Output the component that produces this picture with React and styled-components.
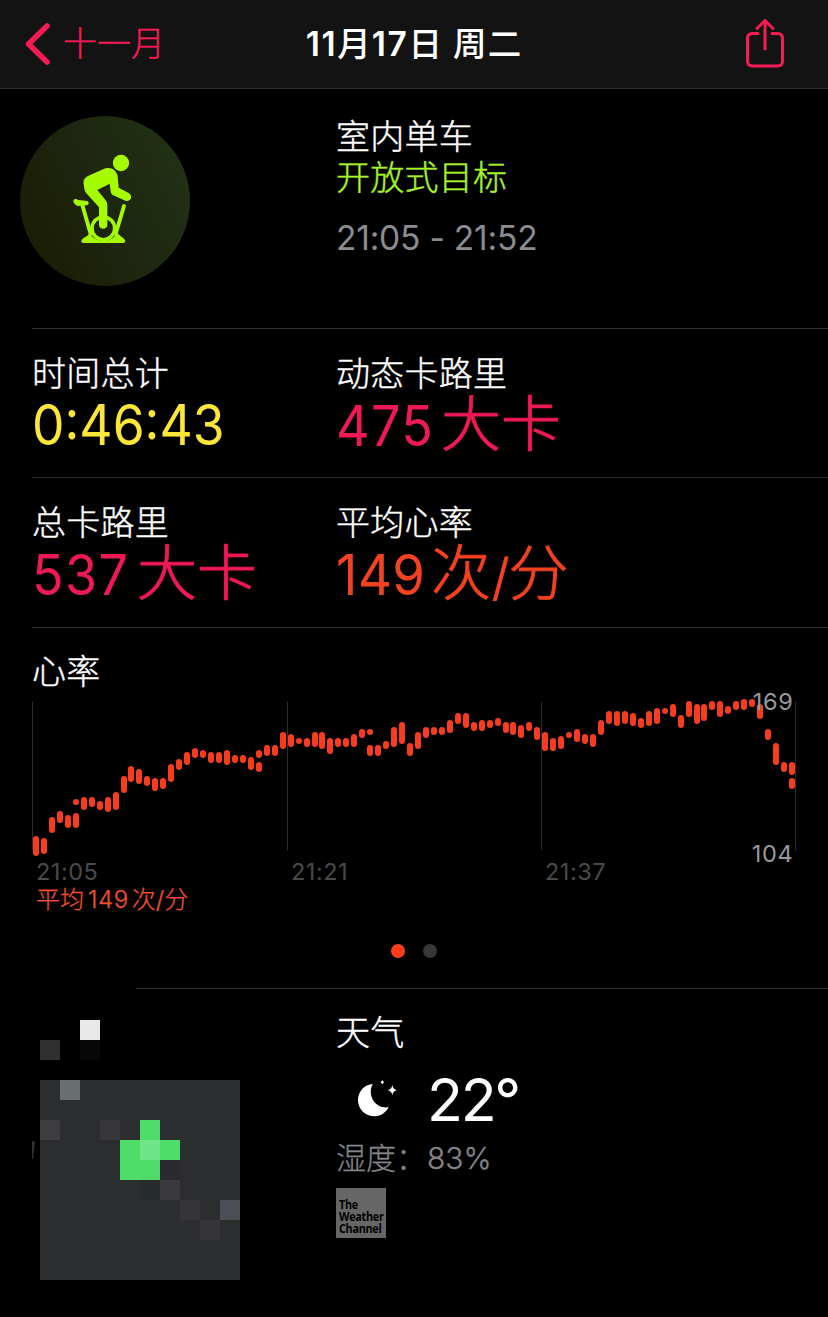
import React from 'react';
import styled, { createGlobalStyle } from 'styled-components';

const GlobalStyle = createGlobalStyle`
  * { box-sizing: border-box; }
  body {
    margin: 0;
    background: #000;
    color: #fff;
    font-family: Inter, "Noto Sans CJK SC", sans-serif;
  }
`;

const Screen = styled.main`
  width: 828px;
  height: 1317px;
  overflow: hidden;
  background: #000;
`;

const NavBar = styled.header`
  display: grid;
  grid-template-columns: 1fr auto 1fr;
  align-items: center;
  height: 89px;
  padding: 0 25px;
  background: #131313;
  border-bottom: 1px solid #2b2b2b;
`;

const BackButton = styled.a`
  display: flex;
  align-items: center;
  gap: 12px;
  color: #f61a55;
  font-size: 34px;
  font-weight: 300;
  line-height: 48px;
  -webkit-text-stroke: 0.35px currentColor;
`;

const NavTitle = styled.h1`
  margin: 0;
  font-size: 33.5px;
  font-weight: 500;
  line-height: 48px;
  letter-spacing: 1.1px;
  white-space: pre;
`;

const TitleNumber = styled.span`
  font-weight: 600;
  letter-spacing: 1.6px;
`;

const ShareButton = styled.a`
  display: flex;
  justify-self: end;
  margin-right: 18px;
`;

const Row = styled.section`
  display: grid;
  grid-template-columns: 304px 1fr;
  height: ${(p) => p.$height}px;
  margin-left: 32px;
  padding-top: ${(p) => p.$top}px;
  border-bottom: ${(p) => (p.$last ? 'none' : '1px solid #2f2f2f')};
`;

const Badge = styled.div`
  width: 170px;
  height: 170px;
  margin-left: -12px;
  border-radius: 50%;
  background: linear-gradient(65deg, #1b1c04 8%, #1e260f 50%, #223216 95%);
`;

const Label = styled.div`
  font-size: 34px;
  font-weight: 300;
  line-height: 41px;
  letter-spacing: 0.25px;
  color: ${(p) => p.$color || '#fff'};
  white-space: nowrap;
  -webkit-text-stroke: 0.4px currentColor;
`;

const TimeRange = styled.div`
  margin-top: 20px;
  font-size: 33.5px;
  line-height: 40px;
  color: #8b8b90;
  letter-spacing: -0.2px;
`;

const Value = styled.div`
  display: flex;
  align-items: baseline;
  height: 64px;
  margin-top: ${(p) => (p.$withUnit ? -2 : -1)}px;
  line-height: 64px;
  font-size: 56px;
  color: ${(p) => p.$color};
  white-space: nowrap;
`;

const Digits = styled.span`
  width: ${(p) => p.$width}px;
  letter-spacing: ${(p) => p.$spacing || 0}px;
  transform: scaleX(${(p) => p.$stretch});
  transform-origin: left;
`;

const Unit = styled.span`
  font-size: 60px;
  font-weight: 300;
  -webkit-text-stroke: 0.9px currentColor;
`;

const Slash = styled.span`
  margin: 0 -1px 0 1px;
  font-size: 50px;
`;

const HeartSection = styled.section`
  height: 360px;
  padding: 23px 0 0 32px;
`;

const Chart = styled.svg`
  display: block;
  margin-top: -2px;
`;

const AxisTimes = styled.div`
  display: grid;
  grid-template-columns: 255px 254px 1fr;
  margin: -7px 0 0 4px;
  color: #4a4a4a;
  font-size: 23.5px;
  line-height: 28px;
  letter-spacing: 0.5px;
`;

const Average = styled.div`
  padding-left: 4px;
  color: #f4502d;
  font-size: 24px;
  font-weight: 300;
  line-height: 28px;
  -webkit-text-stroke: 0.25px currentColor;
`;

const AverageNumber = styled.span`
  margin: 0 3px 0 4px;
  letter-spacing: 0.6px;
`;

const Pager = styled.div`
  display: flex;
  justify-content: center;
  gap: 18px;
  margin: 30px 32px 0 0;
`;

const PageDot = styled.i`
  width: 14px;
  height: 14px;
  border-radius: 50%;
  background: ${(p) => (p.$active ? '#ff3b1d' : '#383838')};
`;

const Divider = styled.div`
  height: 1px;
  margin-left: 136px;
  background: #2f2f2f;
`;

const Weather = styled.div`
  margin-top: -8px;
`;

const WeatherLine = styled.div`
  display: flex;
  align-items: center;
  gap: 29px;
  height: 70px;
  margin-top: 12px;
  padding-left: 21px;
`;

const Temperature = styled.span`
  font-size: 59px;
  line-height: 70px;
  letter-spacing: -2.3px;
`;

const Humidity = styled.div`
  display: flex;
  margin-top: 1px;
  color: #85858a;
  font-size: 30px;
  font-weight: 300;
  line-height: 44px;
  -webkit-text-stroke: 0.3px currentColor;
`;

const HumidityName = styled.span`
  width: 91px;
`;

const ChannelLogo = styled.div`
  width: 50px;
  height: 50px;
  margin-top: 8px;
  padding: 11px 0 0 3px;
  background: #666;
  color: #000;
`;

const LogoText = styled.div`
  width: 50px;
  font: 700 12px/12px "Open Sans", sans-serif;
  letter-spacing: -0.3px;
  white-space: nowrap;
  transform: scaleX(0.9);
  transform-origin: left;
`;

const bars = [
  [0, 836, 856], [1, 838, 854], [2, 817, 833], [3, 811, 823], [4, 815, 828], [5, 813, 828], [5, 799, 805],
  [6, 797, 810], [7, 797, 807], [8, 801, 810], [9, 797, 812], [10, 792, 810], [11, 776, 793], [12, 766, 782],
  [13, 769, 784], [14, 776, 786], [15, 778, 791], [16, 778, 789], [17, 764, 782], [18, 759, 770], [19, 752, 765],
  [20, 748, 758], [21, 750, 758], [22, 752, 763], [23, 752, 763], [24, 750, 765], [25, 755, 763], [26, 755, 763],
  [27, 757, 770], [28, 750, 758], [28, 762, 772], [29, 745, 756], [30, 745, 756], [31, 732, 749], [32, 734, 747],
  [33, 738, 744], [34, 738, 747], [35, 732, 747], [36, 732, 749], [37, 738, 754], [38, 738, 747], [39, 738, 747],
  [40, 734, 747], [41, 729, 738], [42, 729, 735], [42, 745, 756], [43, 745, 756], [44, 741, 749], [45, 727, 747],
  [46, 722, 744], [47, 743, 756], [48, 732, 749], [49, 727, 738], [50, 727, 735], [51, 727, 735], [52, 720, 733],
  [53, 713, 724], [54, 713, 728], [55, 722, 731], [56, 720, 731], [57, 720, 728], [58, 718, 726], [59, 722, 733],
  [60, 722, 735], [61, 725, 738], [62, 722, 731], [63, 727, 740], [64, 732, 751], [65, 738, 751], [66, 736, 749],
  [67, 732, 738], [68, 729, 742], [69, 734, 744], [70, 734, 747], [71, 720, 735], [72, 711, 724], [73, 711, 726],
  [74, 711, 724], [75, 713, 726], [76, 718, 728], [77, 711, 726], [78, 708, 724], [79, 708, 714], [80, 704, 717],
  [81, 715, 728], [82, 701, 717], [83, 704, 724], [84, 704, 721], [85, 701, 710], [86, 701, 717], [87, 706, 714],
  [88, 701, 710], [89, 699, 710], [90, 699, 707], [91, 704, 719], [92, 729, 740], [93, 743, 765], [94, 762, 772],
  [95, 762, 775], [95, 778, 789],
];

function HeartChart() {
  return (
    <Chart width="796" height="175" viewBox="32 690 796 175" overflow="visible">
      {[32, 287, 541, 795].map((x) => (
        <rect key={x} x={x} y="702" width="1" height="148" fill="#2c2c2c" />
      ))}
      {bars.map(([i, top, bottom]) => (
        <rect key={`${i}-${top}`} x={Math.round(36 + i * 7.958) - 3} y={top} width="6" height={bottom - top} rx="3" fill="#f63d22" />
      ))}
      <g fill="#98989c" fontSize="23.5" textAnchor="end" letterSpacing="0.7">
        <text x="793.500" y="710">169</text>
        <text x="793.500" y="862">104</text>
      </g>
    </Chart>
  );
}

const Mosaic = styled.svg`
  display: block;
`;

const tiles = [
  [80, 1020, '#e9e9e9'], [40, 1040, '#303030'], [80, 1040, '#080808'],
  [60, 1080, '#696e71'], [40, 1120, '#3d3d40'], [100, 1120, '#373739'],
  [140, 1120, '#4edb67'], [120, 1140, '#4edb67'], [140, 1140, '#70e386'], [160, 1140, '#4edb67'],
  [120, 1160, '#4edb67'], [140, 1160, '#4edb67'], [160, 1160, '#2b2b2d'],
  [120, 1180, '#2c2d2e'], [140, 1180, '#262c2c'], [160, 1180, '#3a3a3c'], [180, 1200, '#353537'],
  [200, 1220, '#353537'], [220, 1200, '#4d4e56'],
];

function RouteMap() {
  return (
    <Mosaic width="208" height="260" viewBox="32 1020 208 260">
      <rect x="40" y="1080" width="200" height="200" fill="#2c2d2f" />
      {tiles.map(([x, y, fill]) => (
        <rect key={`${x}-${y}`} x={x} y={y} width="20" height="20" fill={fill} />
      ))}
      <path d="M32 1141L35 1142L33 1159H32Z" fill="#303030" />
    </Mosaic>
  );
}

function BikeIcon() {
  return (
    <svg width="170" height="170" viewBox="30 48 510 510" fill="none" stroke="#a5fc00" strokeLinecap="round" strokeLinejoin="round">
      <circle cx="333" cy="189" r="24.5" fill="#a5fc00" stroke="none" />
      <path d="M222 257C218 242 223 234 234 228L286 205C304 200 320 211 323 229L326 263L357 280C369 287 363 306 348 303L310 286C304 283 303 279 302 274L299 251L262 270L287 301Q292 307 292 315V375C292 390 267 390 267 375V322L229 280Q223 273 222 257Z" fill="#a5fc00" stroke="none" />
      <path d="M193 298Q198 295 205 300L232 303C238 306 237 315 230 316L205 318C197 318 185 304 193 298Z" fill="#a5fc00" stroke="none" />
      <path d="M217 315L242 402M342 318L317 402" strokeWidth="11.500" />
      <circle cx="280" cy="385" r="34" strokeWidth="10.500" />
      <path d="M238 397L245 407Q257 422 280 422T315 407L322 400L342 416Q348 423 345 426Q344 429 338 429H220Q214 429 214 424Q214 419 220 415L235 405Z" fill="#a5fc00" stroke="none" />
    </svg>
  );
}

function MoonIcon() {
  return (
    <svg width="41" height="40" viewBox="110 242 123 120" fill="#fff">
      <path d="M157 254C140 287 163 329 205 324C196 341 180 351 162 351C135 351 113 330 113 303C113 276 132 256 157 254Z" />
      <path d="M216 257Q218 270 230 273Q218 275 216 288Q214 275 202 273Q214 270 216 257Z" />
      <path d="M186 243L191 249L186 255L181 249Z" />
    </svg>
  );
}

export default function App() {
  return (
    <Screen>
      <GlobalStyle />
      <NavBar>
        <BackButton>
          <svg width="26" height="44" viewBox="0 0 26 44" fill="none" stroke="#f61a55" strokeWidth="5.500" strokeLinecap="round" strokeLinejoin="round">
            <path d="M22 4L3.500 22L22 40" />
          </svg>
          十一月
        </BackButton>
        <NavTitle>
          <TitleNumber>11</TitleNumber>月<TitleNumber>17</TitleNumber>日 周二
        </NavTitle>
        <ShareButton>
          <svg width="40" height="50" viewBox="0 0 40 50" fill="none" stroke="#f61a55" strokeWidth="3" strokeLinecap="round" strokeLinejoin="round">
            <path d="M13 14.500H7.500Q2.500 14.500 2.500 19.500V42Q2.500 47 7.500 47H32.500Q37.500 47 37.500 42V19.500Q37.500 14.500 32.500 14.500H27M20 30V1.500M12 9.500L20 1.500L28 9.500" />
          </svg>
        </ShareButton>
      </NavBar>

      <Row $height={240} $top={27}>
        <Badge><BikeIcon /></Badge>
        <div>
          <Label>室内单车</Label>
          <Label $color="#a5f52a">开放式目标</Label>
          <TimeRange>21:05 - 21:52</TimeRange>
        </div>
      </Row>

      <Row $height={149} $top={24}>
        <div>
          <Label>时间总计</Label>
          <Value $color="#fce639"><Digits $width={200} $stretch={0.92}>0:46:43</Digits></Value>
        </div>
        <div>
          <Label>动态卡路里</Label>
          <Value $color="#ef1955" $withUnit><Digits $width={105} $stretch={0.93} $spacing={1.4}>475</Digits><Unit>大卡</Unit></Value>
        </div>
      </Row>

      <Row $height={150} $top={24}>
        <div>
          <Label>总卡路里</Label>
          <Value $color="#ef1955" $withUnit><Digits $width={105} $stretch={0.93} $spacing={1.4}>537</Digits><Unit>大卡</Unit></Value>
        </div>
        <div>
          <Label>平均心率</Label>
          <Value $color="#f4411f" $withUnit><Digits $width={95} $stretch={0.94} $spacing={0.5}>149</Digits><Unit>次<Slash>/</Slash>分</Unit></Value>
        </div>
      </Row>

      <HeartSection>
        <Label>心率</Label>
        <HeartChart />
        <AxisTimes>
          <span>21:05</span>
          <span>21:21</span>
          <span>21:37</span>
        </AxisTimes>
        <Average>平均<AverageNumber>149</AverageNumber>次/分</Average>
        <Pager>
          <PageDot $active />
          <PageDot />
        </Pager>
      </HeartSection>
      <Divider />

      <Row $height={300} $top={31} $last>
        <RouteMap />
        <Weather>
          <Label>天气</Label>
          <WeatherLine>
            <MoonIcon />
            <Temperature>22°</Temperature>
          </WeatherLine>
          <Humidity><HumidityName>湿度：</HumidityName>83%</Humidity>
          <ChannelLogo><LogoText>The<br />Weather<br />Channel</LogoText></ChannelLogo>
        </Weather>
      </Row>
    </Screen>
  );
}
